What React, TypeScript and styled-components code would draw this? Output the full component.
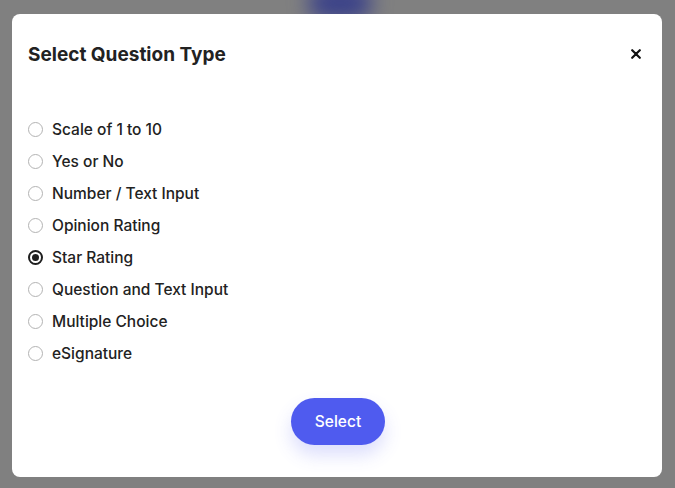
import React, { useState } from 'react'
import styled, { createGlobalStyle } from 'styled-components'

const GlobalStyle = createGlobalStyle`
  html, body {
    margin: 0;
    padding: 0;
    background: #808080;
    font-family: Inter, 'Noto Sans', sans-serif;
  }
`

const Backdrop = styled.div`
  position: relative;
  width: 675px;
  height: 488px;
  background: #808080;
  overflow: hidden;
  padding: 14px 13px 11px 12px;
  box-sizing: border-box;
`

const PageGlow = styled.div`
  position: absolute;
  top: -14px;
  left: 308px;
  width: 64px;
  height: 34px;
  border-radius: 20px;
  background: #3a4189;
  filter: blur(10px);
`

const Modal = styled.div`
  position: relative;
  height: 100%;
  background: #fff;
  border-radius: 8px;
  padding: 28px 16px 32px;
  box-sizing: border-box;
  display: flex;
  flex-direction: column;
`

const Header = styled.div`
  display: flex;
  align-items: center;
  justify-content: space-between;
  height: 24px;
`

const Title = styled.h2`
  margin: 0;
  font-size: 19px;
  font-weight: 700;
  color: #222;
`

const CloseButton = styled.button`
  border: none;
  background: none;
  padding: 0;
  margin-right: 5px;
  width: 11px;
  height: 11px;
  display: flex;
  align-items: center;
  justify-content: center;
  cursor: pointer;
`

const OptionList = styled.div`
  margin-top: 47px;
  display: flex;
  flex-direction: column;
`

const OptionRow = styled.label`
  display: flex;
  align-items: center;
  gap: 9px;
  height: 32px;
  cursor: pointer;
  font-size: 15.5px;
  font-weight: 500;
  color: #222;
`

const RadioCircle = styled.span<{ $checked: boolean }>`
  width: 15px;
  height: 15px;
  border-radius: 50%;
  box-sizing: border-box;
  border: ${(p) => (p.$checked ? '2px solid #1e1e1e' : '1.5px solid #b3b3b3')};
  display: flex;
  align-items: center;
  justify-content: center;

  &::after {
    content: '';
    width: 7px;
    height: 7px;
    border-radius: 50%;
    background: ${(p) => (p.$checked ? '#1e1e1e' : 'transparent')};
  }
`

const Footer = styled.div`
  margin-top: 29px;
  display: flex;
  justify-content: center;
`

const SelectButton = styled.button`
  width: 94px;
  height: 47px;
  margin-left: 2px;
  border: none;
  border-radius: 24px;
  background: #4f5bef;
  color: #fff;
  font-family: Inter, 'Noto Sans', sans-serif;
  font-size: 15.5px;
  font-weight: 500;
  box-shadow: 0 10px 18px rgba(79, 91, 239, 0.2);
  cursor: pointer;
`

const options = [
  'Scale of 1 to 10',
  'Yes or No',
  'Number / Text Input',
  'Opinion Rating',
  'Star Rating',
  'Question and Text Input',
  'Multiple Choice',
  'eSignature',
]

export default function App() {
  const [selected, setSelected] = useState('Star Rating')
  return (
    <>
      <GlobalStyle />
      <Backdrop>
        <PageGlow />
        <Modal>
          <Header>
            <Title>Select Question Type</Title>
            <CloseButton aria-label="Close">
              <svg width="10" height="10" viewBox="0 0 10 10">
                <path d="M1.2 1.2 L8.8 8.8 M8.8 1.2 L1.2 8.8" stroke="#111" strokeWidth="2.2" strokeLinecap="round" />
              </svg>
            </CloseButton>
          </Header>
          <OptionList>
            {options.map((o) => (
              <OptionRow key={o} onClick={() => setSelected(o)}>
                <RadioCircle $checked={selected === o} />
                {o}
              </OptionRow>
            ))}
          </OptionList>
          <Footer>
            <SelectButton>Select</SelectButton>
          </Footer>
        </Modal>
      </Backdrop>
    </>
  )
}
